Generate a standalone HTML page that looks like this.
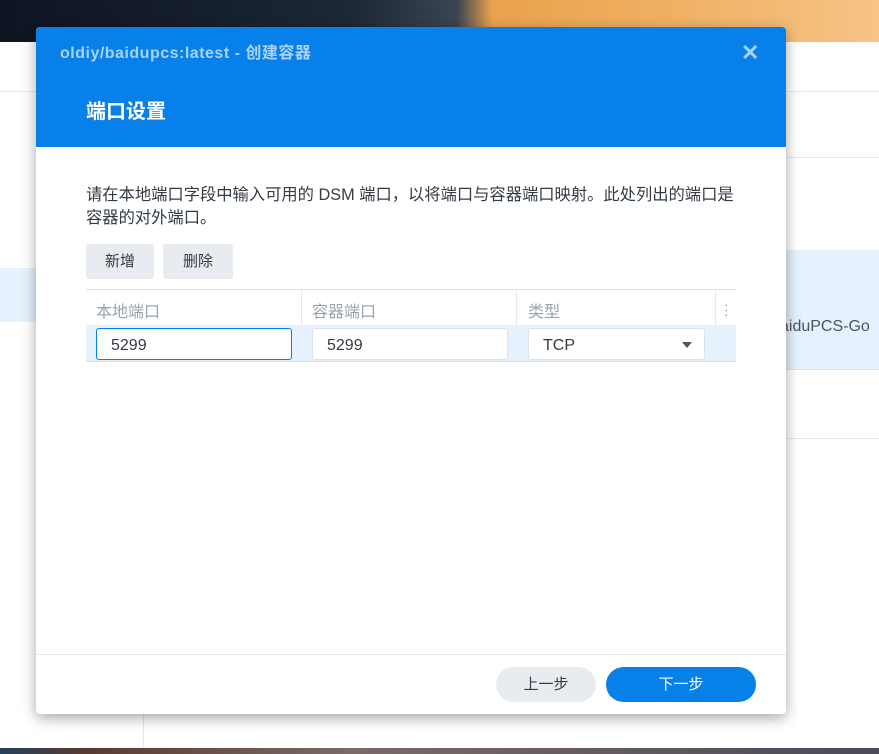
<!DOCTYPE html>
<html><head><meta charset="utf-8"><style>
*{box-sizing:border-box;margin:0;padding:0}
body{width:879px;height:754px;position:relative;overflow:hidden;background:#fff;font-family:"Liberation Sans","Noto Sans CJK SC",sans-serif;}
.abs{position:absolute}
</style></head><body>
<div class="abs" style="left:0;top:0;width:879px;height:42px;background:linear-gradient(90deg,#0d1422 0%,#1d2736 40%,#3b4452 52%,#e9a24c 56%,#f1b368 80%,#f6c486 100%)"></div>
<div class="abs" style="left:0;top:748px;width:879px;height:6px;background:linear-gradient(90deg,#25405a 0%,#5a3a30 10%,#7a6a68 40%,#4a4a58 100%)"></div>
<div class="abs" style="left:0;top:91px;width:879px;height:1px;background:#e6e8eb"></div>
<div class="abs" style="left:786px;top:157px;width:93px;height:1px;background:#e6e8eb"></div>
<div class="abs" style="left:0;top:268px;width:40px;height:54px;background:#e5f1fc"></div>
<div class="abs" style="left:786px;top:250px;width:93px;height:120px;background:#e5f1fc;border-bottom:1px solid #dde3ea"></div>
<div class="abs" style="left:780px;top:318px;font-size:16px;color:#4a5563">aiduPCS-Go</div>
<div class="abs" style="left:786px;top:438px;width:93px;height:1px;background:#e6e8eb"></div>
<div class="abs" style="left:143px;top:714px;width:1px;height:34px;background:#e6e8eb"></div>

<div class="abs" style="left:36px;top:27px;width:750px;height:687px;background:#fff;border-radius:4px;box-shadow:0 4px 14px rgba(0,0,0,.35);overflow:hidden">
 <div class="abs" style="left:0;top:0;width:750px;height:120px;background:#0780ea"></div>
 <div class="abs" style="left:24px;top:12px;font-size:16px;font-weight:bold;color:#a9d3fb;letter-spacing:0.5px">oldiy/baidupcs:latest - 创建容器</div>
 <div class="abs" style="left:705px;top:13px;font-size:22px;font-weight:bold;color:#a9d3fb">✕</div>
 <div class="abs" style="left:50px;top:68px;font-size:20px;font-weight:bold;color:#fff">端口设置</div>
 <div class="abs" style="left:50px;top:157px;width:656px;font-size:16.3px;line-height:23px;color:#333b45">请在本地端口字段中输入可用的 DSM 端口，以将端口与容器端口映射。此处列出的端口是容器的对外端口。</div>
 <div class="abs" style="left:50px;top:217px;width:68px;height:35px;background:#e8ecf1;border-radius:3px;font-size:15px;color:#333b45;text-align:center;line-height:35px">新增</div>
 <div class="abs" style="left:127px;top:217px;width:70px;height:35px;background:#e8ecf1;border-radius:3px;font-size:15px;color:#333b45;text-align:center;line-height:35px">删除</div>
 <div class="abs" style="left:50px;top:262px;width:650px;height:1px;background:#dde3ea"></div>
 <div class="abs" style="left:265px;top:263px;width:1px;height:35px;background:#e6e8eb"></div>
 <div class="abs" style="left:480px;top:263px;width:1px;height:35px;background:#e6e8eb"></div>
 <div class="abs" style="left:679px;top:263px;width:1px;height:35px;background:#e6e8eb"></div>
 <div class="abs" style="left:60px;top:271px;font-size:16px;color:#9aa3ad">本地端口</div>
 <div class="abs" style="left:276px;top:271px;font-size:16px;color:#9aa3ad">容器端口</div>
 <div class="abs" style="left:492px;top:271px;font-size:16px;color:#9aa3ad">类型</div>
 <div class="abs" style="left:688px;top:275px;font-size:14px;color:#9aa3ad;line-height:5px">·<br>·<br>·</div>
 <div class="abs" style="left:50px;top:298px;width:650px;height:37px;background:#e5f1fc;border-bottom:1px solid #d5dde6"></div>
 <div class="abs" style="left:60px;top:301px;width:196px;height:32px;background:#fff;border:1px solid #0780ea;border-radius:3px;font-size:16px;color:#333b45;padding-left:14px;line-height:33px">5299</div>
 <div class="abs" style="left:276px;top:301px;width:196px;height:32px;background:#fff;border:1px solid #dde3ea;border-radius:3px;font-size:16px;color:#333b45;padding-left:14px;line-height:33px">5299</div>
 <div class="abs" style="left:492px;top:301px;width:177px;height:32px;background:#fff;border:1px solid #dde3ea;border-radius:3px;font-size:16px;color:#333b45;padding-left:14px;line-height:33px">TCP<span style="position:absolute;right:12px;top:13px;width:0;height:0;border-left:5px solid transparent;border-right:5px solid transparent;border-top:6px solid #4a5563"></span></div>
 <div class="abs" style="left:0;top:627px;width:750px;height:1px;background:#e6e8eb"></div>
 <div class="abs" style="left:460px;top:640px;width:100px;height:35px;background:#e8ecf1;border-radius:18px;font-size:15px;color:#333b45;text-align:center;line-height:35px">上一步</div>
 <div class="abs" style="left:570px;top:640px;width:150px;height:35px;background:#0780ea;border-radius:18px;font-size:15px;color:#fff;text-align:center;line-height:35px">下一步</div>
</div>
</body></html>
